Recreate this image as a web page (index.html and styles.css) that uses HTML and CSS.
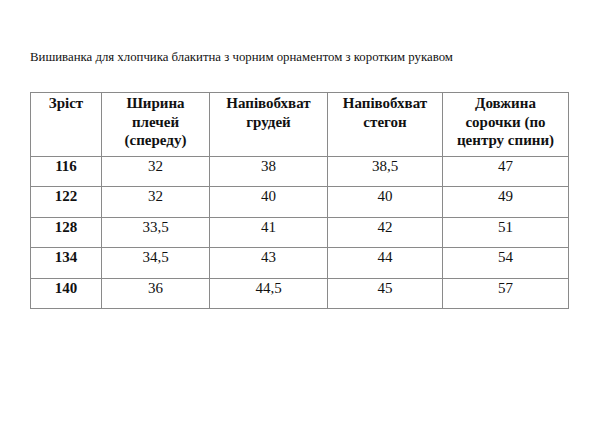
FILE: index.html
```html
<!DOCTYPE html>
<html lang="uk">
<head>
<meta charset="utf-8">
<link rel="stylesheet" href="styles.css">
</head>
<body>
<div class="page">
  <p class="title">Вишиванка для хлопчика блакитна з чорним орнаментом з коротким рукавом</p>
  <table class="sizes">
    <colgroup>
      <col class="c1"><col class="c2"><col class="c3"><col class="c4"><col class="c5">
    </colgroup>
    <thead>
      <tr>
        <th>Зріст</th>
        <th>Ширина плечей (спереду)</th>
        <th>Напівобхват грудей</th>
        <th>Напівобхват стегон</th>
        <th>Довжина сорочки (по центру спини)</th>
      </tr>
    </thead>
    <tbody>
      <tr><td class="h">116</td><td>32</td><td>38</td><td>38,5</td><td>47</td></tr>
      <tr><td class="h">122</td><td>32</td><td>40</td><td>40</td><td>49</td></tr>
      <tr><td class="h">128</td><td>33,5</td><td>41</td><td>42</td><td>51</td></tr>
      <tr><td class="h">134</td><td>34,5</td><td>43</td><td>44</td><td>54</td></tr>
      <tr><td class="h">140</td><td>36</td><td>44,5</td><td>45</td><td>57</td></tr>
    </tbody>
  </table>
</div>
</body>
</html>
```
FILE: styles.css
```css
html, body {
  margin: 0;
  padding: 0;
  background: #fff;
}
.page {
  padding: 50px 0 0 30px;
  font-family: "Liberation Serif", "Times New Roman", serif;
  color: #111;
}
.title {
  margin: 0 0 27px 0;
  font-size: 12.8px;
  line-height: 15px;
}
.sizes {
  border-collapse: collapse;
  table-layout: fixed;
  width: 538px;
  font-size: 15px;
  font-family: "Liberation Serif", "Times New Roman", serif;
  color: #111;
}
.c1 { width: 71px; }
.c2 { width: 108px; }
.c3 { width: 118px; }
.c4 { width: 115px; }
.c5 { width: 126px; }
.sizes th, .sizes td {
  border: 1px solid #8a8a8a;
  text-align: center;
  vertical-align: top;
  padding: 0 6px;
}
.sizes th {
  font-weight: bold;
  line-height: 18.5px;
  height: 62px;
  padding-top: 1px;
}
.sizes td {
  height: 28.4px;
  line-height: 17px;
  padding-top: 1px;
}
.sizes td.h {
  font-weight: bold;
}
```
